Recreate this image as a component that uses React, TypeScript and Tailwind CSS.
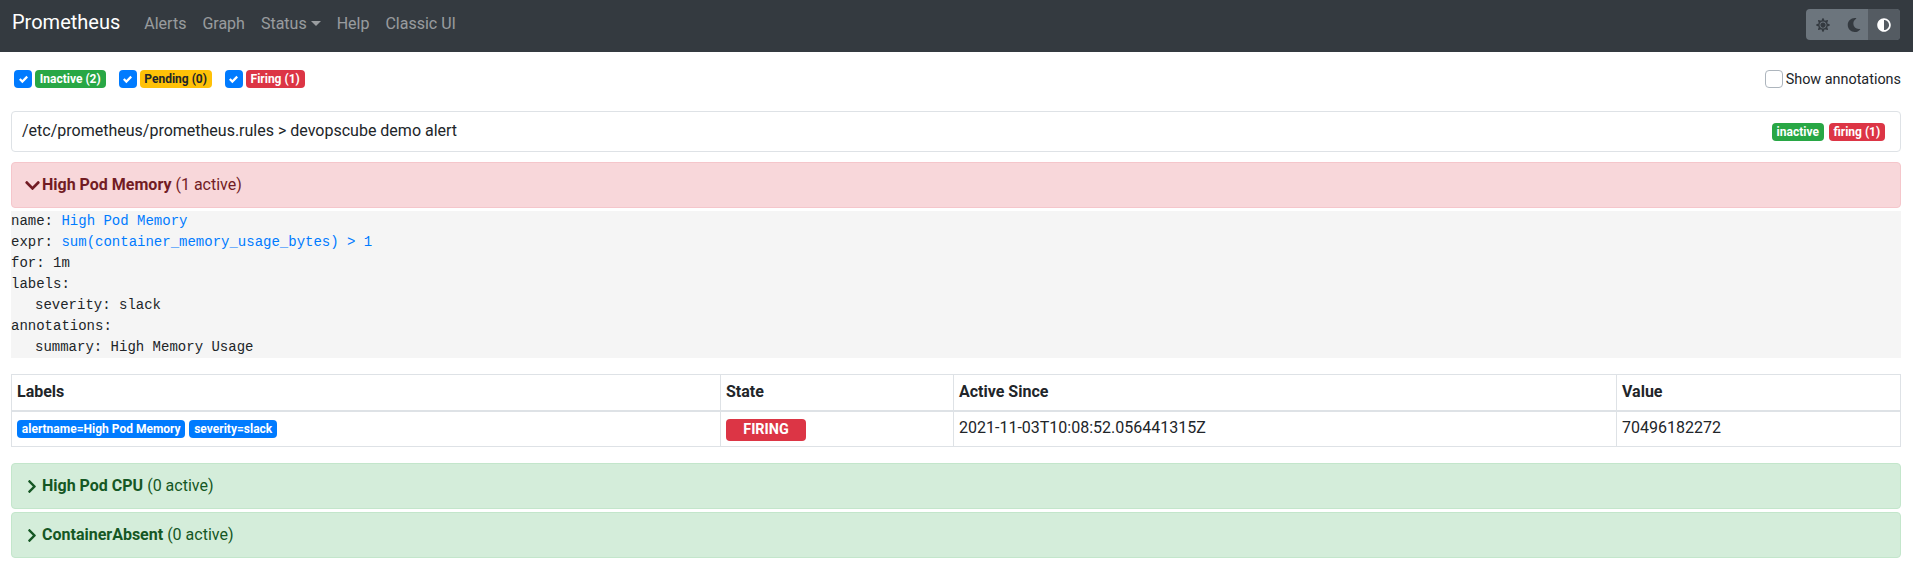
import { FaAdjust, FaChevronDown, FaChevronRight, FaMoon, FaSun } from 'react-icons/fa';

const navLinks = ['Alerts', 'Graph', 'Status', 'Help', 'Classic UI'];

function Check() {
  return (
    <span className="flex h-[18px] w-[18px] items-center justify-center rounded-[4px] bg-[#007bff]">
      <svg viewBox="0 0 8 8" className="h-[9px] w-[9px]">
        <path fill="#fff" d="M6.564.75l-3.59 3.612-1.538-1.55L0 4.26l2.974 2.99L8 2.193z" />
      </svg>
    </span>
  );
}

function Badge({ className, children }: { className: string; children: React.ReactNode }) {
  return (
    <span className={`inline-flex h-[18px] items-center rounded-[4px] px-[4.8px] text-[12px] leading-none font-bold ${className}`}>
      {children}
    </span>
  );
}

function Filter({ className, label }: { className: string; label: string }) {
  return (
    <div className="flex items-center gap-[3px]">
      <Check />
      <Badge className={className}>{label}</Badge>
    </div>
  );
}

function GroupHeader({ title, count }: { title: string; count: string }) {
  return (
    <div className="mb-[3px] flex h-[46px] items-center rounded-[4px] border border-[#c3e6cb] bg-[#d4edda] pl-[15px] text-[#155724]">
      <FaChevronRight className="mr-[5px] h-[15px] w-[10px]" />
      <span className="font-bold">{title}</span>
      <span className="ml-[4px]">{count}</span>
    </div>
  );
}

export default function App() {
  return (
    <div className="min-h-[586px] bg-white font-['Roboto',sans-serif] text-[16px] leading-6 text-[#212529]">
      {/* Navbar */}
      <nav className="flex h-[52px] items-start bg-[#343a40] pr-[13px] pl-[12px]">
        <span className="mt-[10px] mr-[24px] text-[20px] text-white">Prometheus</span>
        <div className="mt-[12px] flex flex-1 gap-[16px] text-[rgba(255,255,255,0.5)]">
          {navLinks.map((link) => (
            <span key={link} className="flex items-center">
              {link}
              {link === 'Status' && (
                <span className="mt-[-1px] ml-[4px] h-0 w-0 border-x-[5px] border-t-[5px] border-x-transparent border-t-[rgba(255,255,255,0.5)]" />
              )}
            </span>
          ))}
        </div>
        <div className="mt-[9px] flex h-[31px] overflow-hidden rounded-[4px] bg-[#6c757d] text-[#343a40]">
          <span className="flex w-[34px] items-center justify-center">
            <FaSun className="h-[14px] w-[14px]" />
          </span>
          <span className="flex w-[28px] items-center justify-center">
            <FaMoon className="h-[14px] w-[14px]" />
          </span>
          <span className="flex w-[32px] items-center justify-center bg-[#545b62] text-white">
            <FaAdjust className="h-[14px] w-[14px]" />
          </span>
        </div>
      </nav>

      <main className="pr-[12px] pl-[11px]">
        {/* Filters */}
        <div className="flex h-[59px] items-start justify-between pt-[18px] pl-[3px]">
          <div className="flex gap-[13px]">
            <Filter className="bg-[#28a745] text-white" label="Inactive (2)" />
            <Filter className="bg-[#ffc107] text-[#212529]" label="Pending (0)" />
            <Filter className="bg-[#dc3545] text-white" label="Firing (1)" />
          </div>
          <div className="flex h-[18px] items-center gap-[3px] text-[14.4px]">
            <span className="h-[18px] w-[18px] rounded-[4px] border border-[#adb5bd] bg-white" />
            <span className="mt-[1px]">Show annotations</span>
          </div>
        </div>

        {/* Rule group title */}
        <div className="flex h-[41px] items-center justify-between rounded-[4px] border border-[#dee2e6] pr-[15px] pl-[10px]">
          <span className="-translate-y-[1px]">/etc/prometheus/prometheus.rules &gt; devopscube demo alert</span>
          <div className="flex gap-[5px]">
            <Badge className="bg-[#28a745] text-white">inactive</Badge>
            <Badge className="bg-[#dc3545] text-white">firing (1)</Badge>
          </div>
        </div>

        {/* Firing alert */}
        <div className="mt-[10px] flex h-[46px] items-center rounded-[4px] border border-[#f5c6cb] bg-[#f8d7da] pl-[13px] text-[#721c24]">
          <FaChevronDown className="mr-[2px] h-[17px] w-[15px]" />
          <span className="font-bold">High Pod Memory</span>
          <span className="ml-[4px]">(1 active)</span>
        </div>

        <pre className="mt-[3px] bg-[#f5f5f5] font-['Liberation_Mono',monospace] text-[14px] leading-[21px] text-[#212529]">
          <div>name: <span className="text-[#007bff]">High Pod Memory</span></div>
          <div>expr: <span className="text-[#007bff]">sum(container_memory_usage_bytes) &gt; 1</span></div>
          <div>for: 1m</div>
          <div>labels:</div>
          <div className="pl-[24px]">severity: slack</div>
          <div>annotations:</div>
          <div className="pl-[24px]">summary: High Memory Usage</div>
        </pre>

        {/* Alerts table */}
        <table className="mt-[16px] w-full table-fixed border-collapse border border-[#dee2e6]">
          <colgroup>
            <col className="w-[709px]" />
            <col className="w-[233px]" />
            <col className="w-[663px]" />
            <col />
          </colgroup>
          <thead>
            <tr className="h-[36px] border-b-2 border-[#dee2e6] text-left font-bold">
              <th className="border border-b-2 border-[#dee2e6] px-[5px]">Labels</th>
              <th className="border border-b-2 border-[#dee2e6] px-[5px]">State</th>
              <th className="border border-b-2 border-[#dee2e6] px-[5px]">Active Since</th>
              <th className="border border-b-2 border-[#dee2e6] px-[5px]">Value</th>
            </tr>
          </thead>
          <tbody>
            <tr className="h-[36px]">
              <td className="border border-[#dee2e6] px-[5px]">
                <div className="flex gap-[4px]">
                  <Badge className="bg-[#007bff] text-white">alertname=High Pod Memory</Badge>
                  <Badge className="bg-[#007bff] text-white">severity=slack</Badge>
                </div>
              </td>
              <td className="border border-[#dee2e6] px-[5px]">
                <span className="flex h-[22px] w-[80px] translate-y-[1px] items-center justify-center rounded-[4px] bg-[#dc3545] text-[14.4px] font-bold text-white">FIRING</span>
              </td>
              <td className="border border-[#dee2e6] px-[5px] pb-[2px]">2021-11-03T10:08:52.056441315Z</td>
              <td className="border border-[#dee2e6] px-[5px] pb-[2px]">70496182272</td>
            </tr>
          </tbody>
        </table>

        <div className="mt-[16px]">
          <GroupHeader title="High Pod CPU" count="(0 active)" />
          <GroupHeader title="ContainerAbsent" count="(0 active)" />
        </div>
      </main>
    </div>
  );
}
